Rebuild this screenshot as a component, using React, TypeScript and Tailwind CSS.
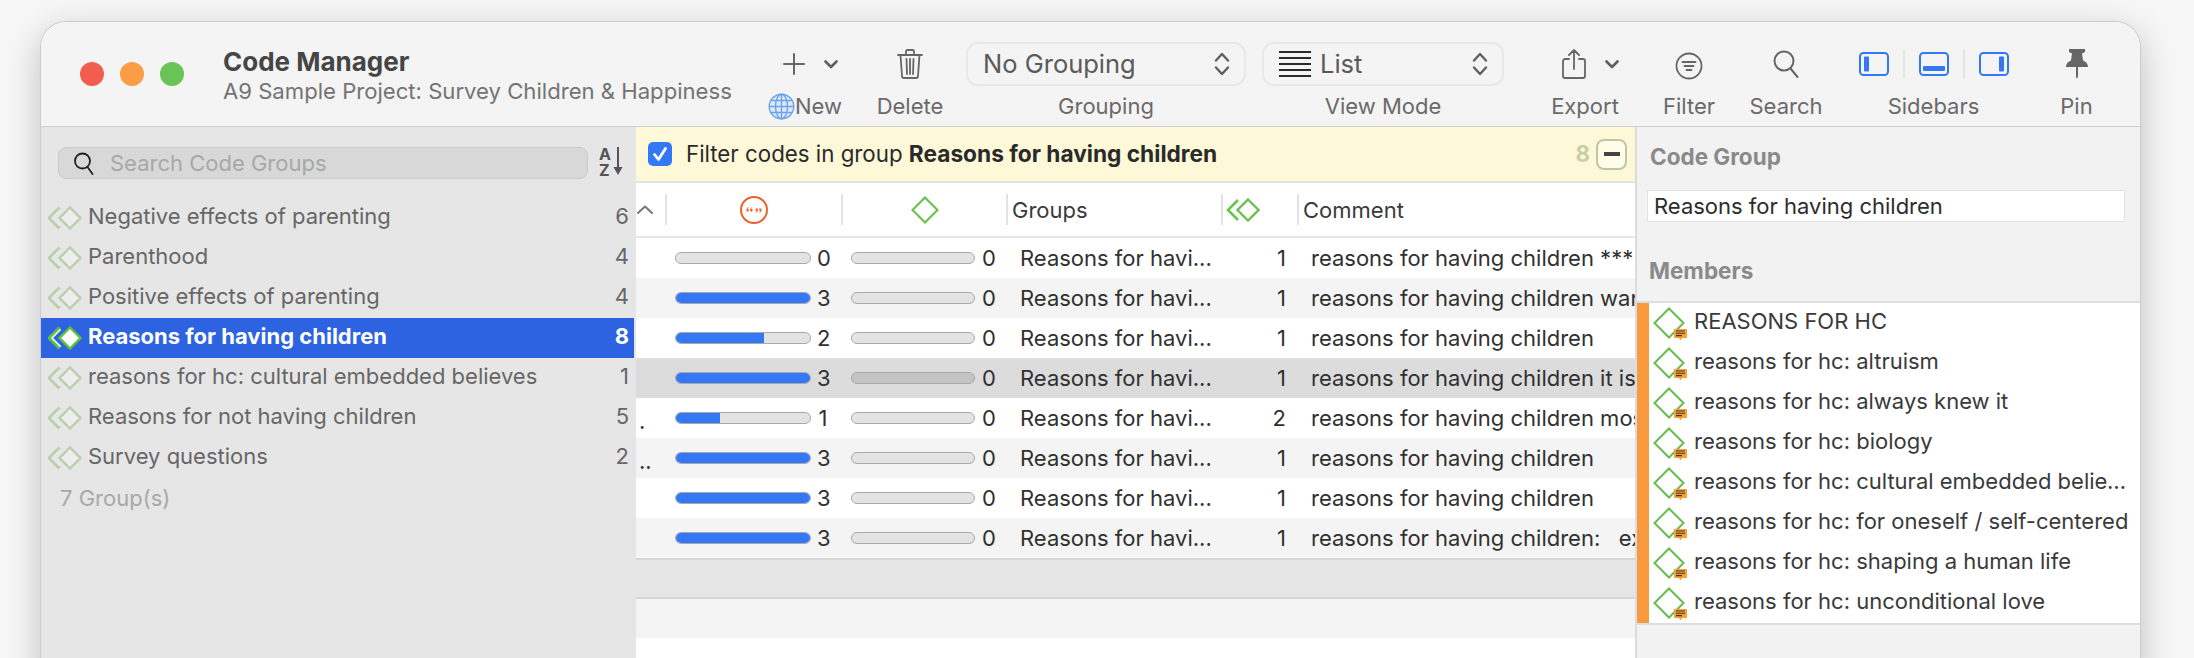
import React from "react";

const rows = [
  { q: 0, pct: 0, n: 1, c: "reasons for having children ***", first: "" },
  { q: 3, pct: 100, n: 1, c: "reasons for having children war", first: "" },
  { q: 2, pct: 66, n: 1, c: "reasons for having children", first: "" },
  { q: 3, pct: 100, n: 1, c: "reasons for having children it is", first: "" },
  { q: 1, pct: 33, n: 2, c: "reasons for having children mos", first: "." },
  { q: 3, pct: 100, n: 1, c: "reasons for having children", first: ".." },
  { q: 3, pct: 100, n: 1, c: "reasons for having children", first: "" },
  { q: 3, pct: 100, n: 1, c: "reasons for having children:   ex", first: "" },
];

const groups: [string, number][] = [
  ["Negative effects of parenting", 6],
  ["Parenthood", 4],
  ["Positive effects of parenting", 4],
  ["Reasons for having children", 8],
  ["reasons for hc: cultural embedded believes", 1],
  ["Reasons for not having children", 5],
  ["Survey questions", 2],
];

const members = [
  "REASONS FOR HC",
  "reasons for hc: altruism",
  "reasons for hc: always knew it",
  "reasons for hc: biology",
  "reasons for hc: cultural embedded believes",
  "reasons for hc: for oneself / self-centered",
  "reasons for hc: shaping a human life",
  "reasons for hc: unconditional love",
];

function Chevron() {
  return (
    <svg width="14" height="9" viewBox="0 0 14 9" fill="none" stroke="#5f5f5f" strokeWidth="2.6" strokeLinecap="round" strokeLinejoin="round">
      <path d="M1.5 1.5 7 7l5.500-5.500" />
    </svg>
  );
}

function UpDown() {
  return (
    <svg width="16" height="24" viewBox="0 0 16 24" fill="none" stroke="#5f5f5f" strokeWidth="2.4" strokeLinecap="round" strokeLinejoin="round">
      <path d="M2 8.500 8 2l6 6.500" />
      <path d="M2 15.500 8 22l6-6.500" />
    </svg>
  );
}

function DoubleDiamond({ selected }: { selected?: boolean }) {
  const stroke = selected ? "#5cc23e" : "#b9cfab";
  const fill = selected ? "#ffffff" : "#ededed";
  return (
    <svg width="34" height="24" viewBox="0 0 34 24" fill="none" className="shrink-0">
      <path d="M12 2 2 12l10 10" stroke={stroke} strokeWidth="4.200" />
      <path d="M12.500 3.500 4 12l8.500 8.500" stroke={selected ? "#ffffff" : "#ededed"} strokeWidth="1.500" />
      <path d="M22 1.500 32.500 12 22 22.500 11.500 12Z" fill={fill} stroke={stroke} strokeWidth="2.400" />
    </svg>
  );
}

function HeaderDoubleDiamond() {
  return (
    <svg width="34" height="24" viewBox="0 0 34 24" fill="none">
      <path d="M12 2 2 12l10 10" stroke="#6cc24f" strokeWidth="2.600" />
      <path d="M22 1.500 32.500 12 22 22.500 11.500 12Z" fill="#ffffff" stroke="#6cc24f" strokeWidth="2.400" />
    </svg>
  );
}

function Comment() {
  return (
    <svg width="13" height="12" viewBox="0 0 13 12" className="absolute left-[21px] top-[22px]">
      <path d="M0 0h13v9H8l-1.500 2.500L5 9H0Z" fill="#f5a13d" />
      <path d="M2 2h9M2 4.300h9M2 6.600h6" stroke="#4a3418" strokeWidth="1.100" />
    </svg>
  );
}

function MemberIcon() {
  return (
    <div className="relative h-[32px] w-[32px] shrink-0">
      <svg width="32" height="32" viewBox="0 0 32 32" fill="none">
        <path d="M16 1.500 30.500 16 16 30.500 1.500 16Z" stroke="#64bd4a" strokeWidth="2" fill="#ffffff" />
      </svg>
      <Comment />
    </div>
  );
}

function Bar({ pct, w, selected }: { pct: number; w: string; selected?: boolean }) {
  return (
    <div className={`h-[12px] overflow-hidden rounded-full border border-[#a9a9a9] ${selected ? "bg-[#c4c4c4]" : "bg-[#e3e3e3]"} ${w}`}>
      <div className="h-full bg-[#3478f6]" style={{ width: `${pct}%` }} />
    </div>
  );
}

function ToolLabel({ children }: { children: React.ReactNode }) {
  return <div className="flex h-[40px] items-center justify-center whitespace-nowrap text-[22px] leading-none text-[#6a6a6a]">{children}</div>;
}

function Popup({ w, children }: { w: string; children: React.ReactNode }) {
  return (
    <div className={`flex h-[44px] items-center justify-between rounded-[12px] border-2 border-[#e8e8e8] pl-[15px] pr-[14px] text-[25.500px] leading-none text-[#5a5a5a] ${w}`}>
      <div className="flex items-center">{children}</div>
      <UpDown />
    </div>
  );
}

function SidebarIcon({ kind }: { kind: "l" | "b" | "r" }) {
  return (
    <svg width="30" height="24" viewBox="0 0 30 24" fill="none">
      <rect x="1" y="1" width="28" height="22" rx="3.500" stroke="#3478f6" strokeWidth="2" />
      {kind === "l" && <rect x="5" y="4.500" width="5" height="15" rx="1" fill="#3478f6" />}
      {kind === "b" && <rect x="4" y="14" width="22" height="5" rx="1" fill="#3478f6" />}
      {kind === "r" && <rect x="20" y="4.500" width="5" height="15" rx="1" fill="#3478f6" />}
    </svg>
  );
}

function Toolbar() {
  return (
    <div className="flex h-[105px] shrink-0 border-b border-[#cfcfcf] bg-[#f4f4f4] text-[#555]">
      <div className="ml-[39px] mt-[40px] flex h-[24px] gap-[16px]">
        <div className="h-[24px] w-[24px] rounded-full bg-[#f25d4e]" />
        <div className="h-[24px] w-[24px] rounded-full bg-[#fb9d45]" />
        <div className="h-[24px] w-[24px] rounded-full bg-[#68c454]" />
      </div>
      <div className="ml-[39px] mt-[25px] w-[549px] shrink-0">
        <div className="h-[29px] text-[26px] font-bold leading-[29px] text-[#454545]">Code Manager</div>
        <div className="whitespace-nowrap text-[22.120px] leading-[31px] text-[#737373]">A9 Sample Project: Survey Children &amp; Happiness</div>
      </div>
      <div className="flex pt-[20px]">
        <div className="w-[78px]">
          <div className="flex h-[44px] items-center gap-[19px] pl-[11px]">
            <svg width="22" height="22" viewBox="0 0 22 22" stroke="#666" strokeWidth="2" strokeLinecap="round"><path d="M11 1v20M1 11h20" /></svg>
            <Chevron />
          </div>
          <ToolLabel>
            <span className="mr-[12px] flex items-center">
              <svg width="27" height="27" viewBox="0 0 27 27" fill="none" stroke="#6ca3e8" strokeWidth="1.400" className="shrink-0">
                <circle cx="13.500" cy="13.500" r="12.300" fill="#dbe9fa" />
                <ellipse cx="13.500" cy="13.500" rx="6" ry="12.300" />
                <path d="M13.500 1.200v24.600M1.200 13.500h24.600M3 7.500h21M3 19.500h21" />
              </svg>
              New
            </span>
          </ToolLabel>
        </div>
        <div className="ml-[20px] w-[80px]">
          <div className="flex h-[44px] items-center justify-center">
            <svg width="26" height="30" viewBox="0 0 26 30" fill="none" stroke="#666" strokeWidth="1.800" strokeLinecap="round" strokeLinejoin="round">
              <path d="M1 6h24M9 6V2.500A1.500 1.500 0 0 1 10.500 1h5A1.500 1.500 0 0 1 17 2.500V6M3.500 6l1.500 21a2 2 0 0 0 2 2h12a2 2 0 0 0 2-2l1.500-21M9.500 10l.5 15M13 10v15M16.500 10l-.5 15" />
            </svg>
          </div>
          <ToolLabel>Delete</ToolLabel>
        </div>
        <div className="ml-[16px] w-[280px]">
          <Popup w="w-[280px]">No Grouping</Popup>
          <ToolLabel>Grouping</ToolLabel>
        </div>
        <div className="ml-[16px] w-[242px]">
          <Popup w="w-[242px]">
            <svg width="32" height="26" viewBox="0 0 32 26" stroke="#2b2b2b" strokeWidth="2" className="mr-[9px]">
              <path d="M0 1h32M0 7h32M0 13h32M0 19h32M0 25h32" />
            </svg>
            List
          </Popup>
          <ToolLabel>View Mode</ToolLabel>
        </div>
        <div className="ml-[41px] w-[80px]">
          <div className="flex h-[44px] items-center gap-[19px] pl-[17px]">
            <svg width="24" height="30" viewBox="0 0 24 30" fill="none" stroke="#666" strokeWidth="1.800" strokeLinecap="round" strokeLinejoin="round">
              <path d="M7 10H3a2 2 0 0 0-2 2v15a2 2 0 0 0 2 2h18a2 2 0 0 0 2-2V12a2 2 0 0 0-2-2h-4M12 20V1.500M7 6l5-5 5 5" />
            </svg>
            <Chevron />
          </div>
          <ToolLabel>Export</ToolLabel>
        </div>
        <div className="ml-[25px] w-[78px]">
          <div className="flex h-[44px] items-center justify-center pt-[4px]">
            <svg width="28" height="28" viewBox="0 0 28 28" fill="none" stroke="#666" strokeWidth="1.800" strokeLinecap="round">
              <circle cx="14" cy="14" r="12.500" />
              <path d="M7.500 10h13M9.500 14h9M11.500 18h5" />
            </svg>
          </div>
          <ToolLabel>Filter</ToolLabel>
        </div>
        <div className="ml-[18px] w-[80px]">
          <div className="flex h-[44px] items-center justify-center">
            <svg width="26" height="28" viewBox="0 0 26 28" fill="none" stroke="#666" strokeWidth="2" strokeLinecap="round">
              <circle cx="11" cy="11" r="9.500" />
              <path d="m17.500 18.500 7 8.500" />
            </svg>
          </div>
          <ToolLabel>Search</ToolLabel>
        </div>
        <div className="ml-[29px] w-[157px]">
          <div className="flex h-[44px] items-center pl-[4px]">
            <SidebarIcon kind="l" />
            <div className="mx-[14px] h-[28px] w-[2px] bg-[#e4e4e4]" />
            <SidebarIcon kind="b" />
            <div className="mx-[14px] h-[28px] w-[2px] bg-[#e4e4e4]" />
            <SidebarIcon kind="r" />
          </div>
          <ToolLabel>Sidebars</ToolLabel>
        </div>
        <div className="ml-[28px] w-[73px]">
          <div className="flex h-[44px] items-center justify-center">
            <svg width="22" height="30" viewBox="0 0 22 30" fill="#666">
              <path d="M3 0h16v3l-3 1.500 1 7c2.500 1 5 3 5 6.500H12v9.500L11 30l-1-2.500V18H0c0-3.500 2.500-5.500 5-6.500l1-7L3 3Z" />
            </svg>
          </div>
          <ToolLabel>Pin</ToolLabel>
        </div>
      </div>
    </div>
  );
}

function LeftPanel() {
  return (
    <div className="flex w-[595px] shrink-0 flex-col bg-[#e6e6e6] pr-[2px]">
      <div className="mt-[20px] flex h-[32px] items-start">
        <div className="ml-[17px] flex h-[32px] w-[530px] items-center rounded-[8px] border border-[#cbcbcb] bg-[#d8d8d8] pl-[15px]">
          <svg width="20" height="23" viewBox="0 0 20 23" fill="none" stroke="#222" strokeWidth="1.800" strokeLinecap="round">
            <circle cx="8.500" cy="9" r="7.500" />
            <path d="m13.500 15 5 7" />
          </svg>
          <span className="ml-[16px] text-[22px] leading-none text-[#a8a8a8]">Search Code Groups</span>
        </div>
        <svg width="26" height="31" viewBox="0 0 26 31" className="ml-[11px] -mt-[1px]" fill="none">
          <text x="0" y="14" fontFamily="Inter, sans-serif" fontSize="16" fontWeight="700" fill="#555">A</text>
          <text x="0" y="30" fontFamily="Inter, sans-serif" fontSize="16" fontWeight="700" fill="#555">Z</text>
          <path d="M19 1v22" stroke="#555" strokeWidth="2" />
          <path d="m14.500 21 4.500 8 4.500-8Z" fill="#555" />
        </svg>
      </div>
      <div className="mt-[19px] flex flex-col">
        {groups.map(([name, n], i) => {
          const sel = i === 3;
          return (
            <div key={name} className={`flex h-[40px] items-center pl-[7px] pr-[5px] text-[22px] leading-none ${sel ? "bg-[#2d63e0] font-bold text-white" : "text-[#666]"}`}>
              <DoubleDiamond selected={sel} />
              <span className="mb-[5px] ml-[6px] flex-1 whitespace-nowrap">{name}</span>
              <span className="mb-[5px]">{n}</span>
            </div>
          );
        })}
        <div className="flex h-[40px] items-center pl-[19px] text-[22px] leading-none text-[#a9a9a9]">7 Group(s)</div>
      </div>
    </div>
  );
}

const colGrid = "grid grid-cols-[29px_176px_165px_215px_76px_340px]";

function MiddlePanel() {
  return (
    <div className="flex w-[1001px] shrink-0 flex-col overflow-hidden border-r-2 border-[#dcdcdc] bg-white">
      <div className="flex h-[56px] shrink-0 items-center border-b-2 border-[#e4e4e4] bg-[#fdf9d8] pl-[12px] pr-[8px] text-[22.300px] leading-none text-[#2a2a2a]">
        <div className="flex h-[24px] w-[24px] shrink-0 items-center justify-center rounded-[5px] bg-[#3478f6]">
          <svg width="16" height="16" viewBox="0 0 16 16" fill="none" stroke="#fff" strokeWidth="2.800" strokeLinecap="round" strokeLinejoin="round">
            <path d="m2.500 8.500 4 5 7-11" />
          </svg>
        </div>
        <span className="ml-[14px] flex-1 whitespace-nowrap">
          Filter codes in group <b className="text-[22.700px] font-bold">Reasons for having children</b>
        </span>
        <span className="mr-[6px] font-bold text-[#c9cfa3]">8</span>
        <div className="flex h-[31px] w-[31px] items-center justify-center rounded-[8px] border-2 border-[#bfc7a2] bg-[#fffde8]">
          <div className="h-[4px] w-[16px] bg-[#444]" />
        </div>
      </div>
      <div className={`${colGrid} h-[55px] shrink-0 border-b-2 border-[#e6e6e6] text-[22px] leading-none text-[#3a3a3a]`}>
        <div className="flex items-center justify-between pl-[2px]">
          <svg width="16" height="9" viewBox="0 0 16 9" fill="none" stroke="#777" strokeWidth="2" strokeLinecap="round" strokeLinejoin="round" className="ml-[-1px]"><path d="m1 8 7-6.500L15 8" /></svg>
        </div>
        <div className="my-[11px] flex items-center justify-center border-l-2 border-[#e2e2e2]">
          <svg width="30" height="30" viewBox="0 0 30 30" fill="none">
            <circle cx="15" cy="15" r="13" stroke="#ef5f2b" strokeWidth="2" />
            <g fill="#ef5f2b">
              <path d="M7.500 16.500h2.200v-2.500h-1.100q0-1 1.100-1.500V12q-2.200.5-2.200 2.500Z" />
              <path d="M11.200 16.500h2.200v-2.500h-1.100q0-1 1.100-1.500V12q-2.200.5-2.200 2.500Z" />
              <path d="M18.800 13.500h-2.200V16h1.100q0 1-1.100 1.500v.5q2.200-.5 2.200-2.500Z" />
              <path d="M22.500 13.500h-2.200V16h1.100q0 1-1.100 1.500v.5q2.200-.5 2.200-2.500Z" />
            </g>
          </svg>
        </div>
        <div className="my-[11px] flex items-center justify-center border-l-2 border-[#e2e2e2]">
          <svg width="28" height="28" viewBox="0 0 28 28" fill="none">
            <path d="M14 1.500 26.500 14 14 26.500 1.500 14Z" stroke="#6cc24f" strokeWidth="2.200" />
          </svg>
        </div>
        <div className="my-[11px] flex items-center border-l-2 border-[#e2e2e2] pl-[4px]">Groups</div>
        <div className="my-[11px] flex items-center border-l-2 border-[#e2e2e2] pl-[3px]">
          <HeaderDoubleDiamond />
        </div>
        <div className="my-[11px] flex items-center border-l-2 border-[#e2e2e2] pl-[4px]">Comment</div>
      </div>
      <div className="shrink-0">
        {rows.map((r, i) => {
          const sel = i === 3;
          const bg = sel ? "bg-[#dcdcdc]" : i % 2 ? "bg-[#f4f4f4]" : "bg-white";
          return (
            <div key={i} className={`${colGrid} h-[40px] items-center whitespace-pre text-[22px] leading-none text-[#303030] ${bg}`}>
              <div className="self-end overflow-hidden pb-[3px] pl-[3px] leading-[28px] text-[#333]">{r.first}</div>
              <div className="flex items-center pl-[10px]">
                <Bar pct={r.pct} w="w-[136px]" />
                <span className="ml-[6px] w-[12px] text-center">{r.q}</span>
              </div>
              <div className="flex items-center pl-[10px]">
                <Bar pct={0} w="w-[124px]" selected={sel} />
                <span className="ml-[7px] w-[12px] text-center">0</span>
              </div>
              <div className="pl-[14px]">Reasons for havi...</div>
              <div className="pr-[11px] text-right">{r.n}</div>
              <div className="overflow-hidden pl-[14px] leading-[30px]">{r.c}</div>
            </div>
          );
        })}
      </div>
      <div className="h-[41px] shrink-0 border-y-2 border-[#d6d6d6] bg-[#e6e6e6]" />
      <div className="h-[39px] shrink-0 bg-[#f4f4f4]" />
      <div className="flex-1" />
    </div>
  );
}

function RightPanel() {
  return (
    <div className="flex min-w-0 flex-1 flex-col bg-[#f2f2f2]">
      <div className="pl-[13px] pt-[16px] text-[22.500px] font-bold leading-[28px] text-[#8a8a8a]">Code Group</div>
      <div className="ml-[10px] mr-[15px] mt-[19px] flex h-[32px] items-center border border-[#e3e3e3] bg-white pl-[6px] text-[22px] leading-none text-[#2c2c2c]">Reasons for having children</div>
      <div className="flex h-[79px] items-center pl-[12px] pt-[18px] text-[22.500px] font-bold text-[#8a8a8a]">Members</div>
      <div className="flex border-y-2 border-[#dedede] bg-white">
        <div className="w-[12px] shrink-0 bg-[#f89b3f]" />
        <div className="min-w-0 flex-1">
          {members.map((m) => (
            <div key={m} className="flex h-[40px] items-center pl-[4px] pr-[11px] text-[22px] leading-[30px] text-[#3a3a3a]">
              <MemberIcon />
              <span className="mb-[5px] ml-[9px] min-w-0 truncate">{m}</span>
            </div>
          ))}
        </div>
      </div>
    </div>
  );
}

export default function App() {
  return (
    <div className="h-[658px] w-[2194px] overflow-hidden bg-[#f7f7f7] pl-[40px] pt-[21px] [font-family:Inter,'Liberation_Sans',sans-serif]">
      <div className="flex h-[660px] w-[2101px] flex-col overflow-hidden rounded-t-[26px] border border-b-0 border-[#cccccc] bg-white shadow-[0_10px_36px_rgba(0,0,0,0.22)]">
        <Toolbar />
        <div className="flex min-h-0 flex-1">
          <LeftPanel />
          <MiddlePanel />
          <RightPanel />
        </div>
      </div>
    </div>
  );
}
